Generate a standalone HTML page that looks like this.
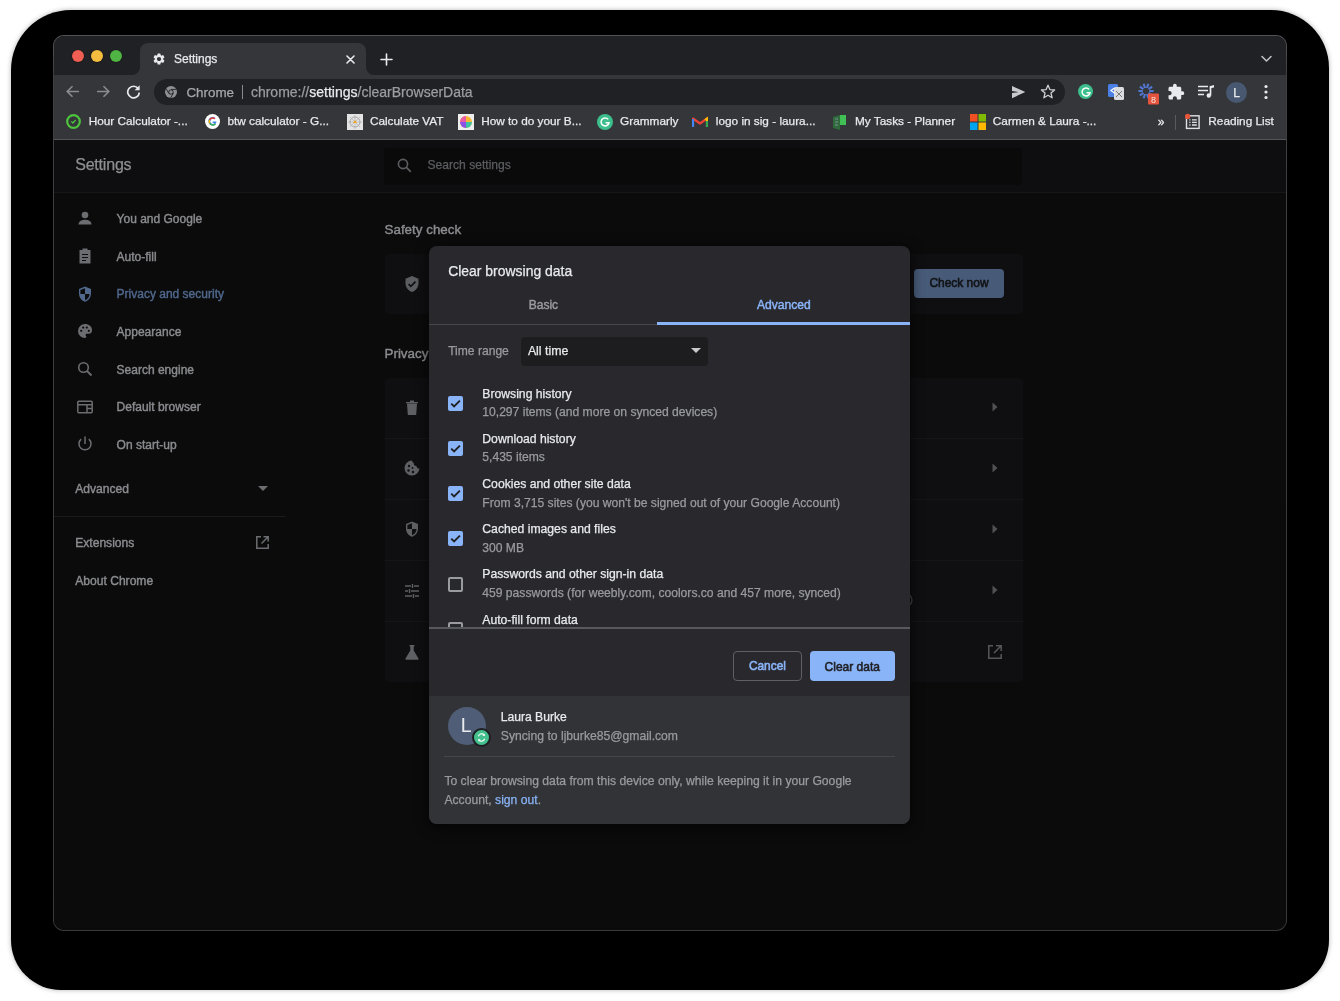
<!DOCTYPE html><html><head><meta charset="utf-8"><style>html,body{margin:0;padding:0;background:#fff;width:1340px;height:1001px;overflow:hidden;position:relative;font-family:"Liberation Sans", sans-serif} div{-webkit-text-stroke-width:0.25px}</style></head><body><div style="position:absolute;left:0;top:0;width:1340px;height:1001px;will-change:transform"><div style="position:absolute;left:11px;top:10px;width:1318px;height:980px;background:#000;border-radius:60px 58px 50px 50px;box-shadow:0 0 5px rgba(0,0,0,0.3)"></div><div style="position:absolute;left:53px;top:35px;width:1234px;height:896px;background:linear-gradient(#525255,#3f3f42 40px,#3a3a3c);border-radius:11px;overflow:hidden"><div style="position:absolute;left:1px;top:1px;width:1232px;height:894px;background:#0b0b0c;border-radius:10px;overflow:hidden"></div></div><div style="position:absolute;left:54px;top:36px;width:1232px;height:39px;background:#202124;border-radius:10px 10px 0 0"></div><div style="position:absolute;left:140px;top:43px;width:226px;height:32px;background:#35363a;border-radius:8px 8px 0 0"></div><svg style="position:absolute;left:132px;top:67px" width="8" height="8"><path d="M8 0 V8 H0 A8 8 0 0 0 8 0Z" fill="#35363a"/></svg><svg style="position:absolute;left:366px;top:67px" width="8" height="8"><path d="M0 0 V8 H8 A8 8 0 0 1 0 0Z" fill="#35363a"/></svg><div style="position:absolute;left:54px;top:75px;width:1232px;height:64px;background:#35363a;"></div><div style="position:absolute;left:54px;top:139px;width:1232px;height:1px;background:#545558;"></div><div style="position:absolute;left:54px;top:140px;width:1232px;height:790px;background:#0b0b0c;border-radius:0 0 10px 10px"></div><div style="position:absolute;left:54px;top:140px;width:1232px;height:52px;background:#0e0e10;"></div><div style="position:absolute;left:72px;top:50px;width:12px;height:12px;border-radius:50%;background:#ee5e52;box-shadow:0 0 0 0.6px rgba(0,0,0,0.35)"></div><div style="position:absolute;left:91px;top:50px;width:12px;height:12px;border-radius:50%;background:#f4bd3f;box-shadow:0 0 0 0.6px rgba(0,0,0,0.35)"></div><div style="position:absolute;left:110px;top:50px;width:12px;height:12px;border-radius:50%;background:#4fb443;box-shadow:0 0 0 0.6px rgba(0,0,0,0.35)"></div><svg style="position:absolute;left:152px;top:52px" width="14" height="14" viewBox="0 0 24 24"><path fill="#e8eaed" d="M19.14 12.94c.04-.3.06-.61.06-.94 0-.32-.02-.64-.07-.94l2.03-1.58a.49.49 0 0 0 .12-.61l-1.92-3.32a.488.488 0 0 0-.59-.22l-2.39.96c-.5-.38-1.03-.7-1.62-.94l-.36-2.54a.484.484 0 0 0-.48-.41h-3.84c-.24 0-.43.17-.47.41l-.36 2.54c-.59.24-1.13.57-1.62.94l-2.39-.96c-.22-.08-.47 0-.59.22L2.74 8.87c-.12.21-.08.47.12.61l2.03 1.58c-.05.3-.09.63-.09.94s.02.64.07.94l-2.03 1.58a.49.49 0 0 0-.12.61l1.92 3.32c.12.22.37.29.59.22l2.39-.96c.5.38 1.03.7 1.62.94l.36 2.54c.05.24.24.41.48.41h3.84c.24 0 .44-.17.47-.41l.36-2.54c.59-.24 1.13-.56 1.62-.94l2.39.96c.22.08.47 0 .59-.22l1.92-3.32c.12-.22.07-.47-.12-.61l-2.01-1.58zM12 15.6c-1.98 0-3.6-1.62-3.6-3.6s1.62-3.6 3.6-3.6 3.6 1.62 3.6 3.6-1.62 3.6-3.6 3.6z"/></svg><div style="position:absolute;left:174px;top:53.24px;font-size:12px;line-height:12px;color:#e8eaed;font-weight:400;white-space:nowrap;">Settings</div><svg style="position:absolute;left:346px;top:55px" width="9" height="9" viewBox="0 0 9 9"><path d="M1 1L8 8M8 1L1 8" stroke="#e8eaed" stroke-width="1.6" stroke-linecap="round"/></svg><svg style="position:absolute;left:380px;top:53px" width="13" height="13" viewBox="0 0 13 13"><path d="M6.5 1V12M1 6.5H12" stroke="#e8eaed" stroke-width="1.6" stroke-linecap="round"/></svg><svg style="position:absolute;left:1261px;top:55px" width="11" height="8" viewBox="0 0 11 8"><path d="M1 1.5L5.5 6L10 1.5" stroke="#c4c5c8" stroke-width="1.5" fill="none" stroke-linecap="round" stroke-linejoin="round"/></svg><svg style="position:absolute;left:66px;top:85px" width="14" height="13" viewBox="0 0 14 13"><path d="M13 6.5H1.5M6.5 1.2L1.2 6.5L6.5 11.8" stroke="#8a8b8e" stroke-width="1.6" fill="none"/></svg><svg style="position:absolute;left:96px;top:85px" width="14" height="13" viewBox="0 0 14 13"><path d="M1 6.5H12.5M7.5 1.2L12.8 6.5L7.5 11.8" stroke="#8a8b8e" stroke-width="1.6" fill="none"/></svg><svg style="position:absolute;left:126px;top:84px" width="15" height="15" viewBox="0 0 15 15"><path d="M12.2 4.6A5.8 5.8 0 1 0 13.3 8.6" stroke="#e8eaed" stroke-width="1.7" fill="none"/><path d="M13.6 1.2V6.2H8.6Z" fill="#e8eaed"/></svg><div style="position:absolute;left:154px;top:79px;width:911px;height:26px;background:#202124;border-radius:13px"></div><svg style="position:absolute;left:165px;top:86px" width="12" height="12" viewBox="0 0 12 12"><circle cx="6" cy="6" r="6" fill="#8f9094"/><circle cx="6" cy="6" r="2.6" fill="#202124"/><circle cx="6" cy="6" r="1.8" fill="#8f9094"/><path d="M6 3.4H11.4M3.75 7.3L1.1 2.6M8.25 7.3L5.6 11.9" stroke="#202124" stroke-width="0.9"/></svg><div style="position:absolute;left:186.4px;top:85.76px;font-size:13.4px;line-height:13.4px;color:#a6a7aa;font-weight:400;white-space:nowrap;">Chrome</div><div style="position:absolute;left:242px;top:85px;width:1px;height:14px;background:#8a8b8e;"></div><div style="position:absolute;left:250.9px;top:84.75px;font-size:14px;line-height:14px;white-space:nowrap;color:#9c9da0">chrome://<span style="color:#e8eaed">settings</span>/clearBrowserData</div><svg style="position:absolute;left:1011.5px;top:86px" width="14" height="12.5" viewBox="0 0 14 12.5"><path d="M0 0L13.3 6.1L0 12.2V7.1L6.8 6.1L0 5.1Z" fill="#c8c9cc"/></svg><svg style="position:absolute;left:1040px;top:84px" width="16" height="15" viewBox="0 0 16 15"><path d="M8 1.2L9.9 5.6L14.6 6L11 9.1L12.1 13.8L8 11.3L3.9 13.8L5 9.1L1.4 6L6.1 5.6Z" stroke="#d0d1d4" stroke-width="1.3" fill="none" stroke-linejoin="round"/></svg><div style="position:absolute;left:1078px;top:84px;width:15px;height:15px;border-radius:50%;background:#3cbf8c"></div><svg style="position:absolute;left:1077.5px;top:83.5px" width="16" height="16" viewBox="0 0 16 16"><path d="M11.2 5.4A4 4 0 1 0 12 8.8H8.6" stroke="#fff" stroke-width="1.5" fill="none"/></svg><svg style="position:absolute;left:1107px;top:83px" width="18" height="18" viewBox="0 0 18 18"><rect x="1" y="1" width="10" height="13" rx="1.5" fill="#4a80e6"/><rect x="7" y="4" width="10" height="13" rx="1.5" fill="#dadce0"/><path d="M9 8L15 14M15 8L9 14" stroke="#777" stroke-width="1"/><path d="M7.5 5L4 7.5L7.5 10" stroke="#fff" stroke-width="1.2" fill="none"/></svg><svg style="position:absolute;left:1137px;top:82px" width="24" height="24" viewBox="0 0 24 24"><path d="M12.20 9.00L16.60 9.00M11.59 10.88L15.15 13.47M9.99 12.04L11.35 16.23M8.01 12.04L6.65 16.23M6.41 10.88L2.85 13.47M5.80 9.00L1.40 9.00M6.41 7.12L2.85 4.53M8.01 5.96L6.65 1.77M9.99 5.96L11.35 1.77M11.59 7.12L15.15 4.53" stroke="#5177cf" stroke-width="2.1"/><rect x="11" y="11.5" width="11" height="11" rx="1" fill="#e5533c"/><text x="16.5" y="20.6" font-size="9" fill="#f3e8e0" text-anchor="middle" font-family="Liberation Sans">8</text></svg><svg style="position:absolute;left:1167px;top:83px" width="18" height="18" viewBox="0 0 24 24"><path fill="#e8eaed" d="M20.5 11H19V7c0-1.1-.9-2-2-2h-4V3.5a2.5 2.5 0 0 0-5 0V5H4c-1.1 0-1.99.9-1.99 2v3.8H3.5c1.49 0 2.7 1.21 2.7 2.7s-1.21 2.7-2.7 2.7H2V20c0 1.1.9 2 2 2h3.8v-1.5c0-1.49 1.21-2.7 2.7-2.7s2.7 1.21 2.7 2.7V22H17c1.1 0 2-.9 2-2v-4h1.5a2.5 2.5 0 0 0 0-5z"/></svg><svg style="position:absolute;left:1197px;top:84px" width="18" height="15" viewBox="0 0 18 15"><path d="M1 2.5H11M1 6.5H11M1 10.5H7" stroke="#e8eaed" stroke-width="1.7"/><path d="M13.5 2V11.5" stroke="#e8eaed" stroke-width="1.7"/><path d="M13.5 2L17 1V3.5L13.5 4.3Z" fill="#e8eaed"/><circle cx="11.8" cy="11.5" r="2.2" fill="#e8eaed"/></svg><div style="position:absolute;left:1226px;top:82px;width:21px;height:21px;border-radius:50%;background:#475870"></div><div style="position:absolute;left:936.5px;width:600px;text-align:center;top:86.84px;font-size:12px;line-height:12px;color:#e8eaed;font-weight:400;white-space:nowrap;">L</div><svg style="position:absolute;left:1262px;top:84px" width="8" height="16" viewBox="0 0 8 16"><circle cx="4" cy="2.5" r="1.6" fill="#e8eaed"/><circle cx="4" cy="8" r="1.6" fill="#e8eaed"/><circle cx="4" cy="13.5" r="1.6" fill="#e8eaed"/></svg><svg style="position:absolute;left:66px;top:114px" width="15" height="15" viewBox="0 0 15 15"><circle cx="7.5" cy="7.5" r="6.3" stroke="#4cc43c" stroke-width="2.2" fill="none"/><path d="M5.3 7.6L6.9 9L9.6 6" stroke="#4cc43c" stroke-width="1.3" fill="none"/></svg><div style="position:absolute;left:88.7px;top:116.41px;font-size:11.8px;line-height:11.8px;color:#e8eaed;font-weight:400;white-space:nowrap;">Hour Calculator -...</div><svg style="position:absolute;left:205px;top:114px" width="15" height="15" viewBox="0 0 15 15"><circle cx="7.5" cy="7.5" r="7.5" fill="#fff"/><path d="M11.6 7.6H7.6V9.2H9.9A2.6 2.6 0 1 1 9.3 5.3L10.5 4.2A4.2 4.2 0 1 0 11.6 7.6Z" fill="#4285f4"/><path d="M4 5.4L5.3 6.4A2.6 2.6 0 0 1 9.3 5.3L10.5 4.2A4.2 4.2 0 0 0 4 5.4Z" fill="#ea4335"/><path d="M4 9.6L5.3 8.6A2.6 2.6 0 0 0 9.9 9.2L11 10.3A4.2 4.2 0 0 1 4 9.6Z" fill="#34a853"/><path d="M4 5.4L5.3 6.4A2.6 2.6 0 0 0 5.3 8.6L4 9.6A4.2 4.2 0 0 1 4 5.4Z" fill="#fbbc05"/></svg><div style="position:absolute;left:227.4px;top:116.41px;font-size:11.8px;line-height:11.8px;color:#e8eaed;font-weight:400;white-space:nowrap;">btw calculator - G...</div><svg style="position:absolute;left:347px;top:114px" width="16" height="16" viewBox="0 0 16 16"><rect width="16" height="16" fill="#e4e4e4"/><circle cx="8" cy="8" r="5" stroke="#999" stroke-width="0.8" fill="none"/><path d="M8 1V15M1 8H15M3 3L13 13M13 3L3 13" stroke="#aaa" stroke-width="0.6"/><path d="M6 9L8 6L10 9Z" fill="#f2a91e"/></svg><div style="position:absolute;left:369.9px;top:116.41px;font-size:11.8px;line-height:11.8px;color:#e8eaed;font-weight:400;white-space:nowrap;">Calculate VAT</div><svg style="position:absolute;left:458px;top:114px" width="16" height="16" viewBox="0 0 16 16"><rect width="16" height="16" fill="#eee"/><circle cx="8" cy="8" r="6" fill="#f7b733"/><path d="M8 2A6 6 0 0 0 2 8H8Z" fill="#e85ba6"/><path d="M2 8A6 6 0 0 0 8 14V8Z" fill="#8c52e8"/><path d="M8 14A6 6 0 0 0 14 8H8Z" fill="#3fc3a2"/></svg><div style="position:absolute;left:481.2px;top:116.41px;font-size:11.8px;line-height:11.8px;color:#e8eaed;font-weight:400;white-space:nowrap;">How to do your B...</div><div style="position:absolute;left:597px;top:114px;width:16px;height:16px;border-radius:50%;background:#3cbf8c"></div><svg style="position:absolute;left:597px;top:114px" width="16" height="16" viewBox="0 0 16 16"><path d="M11.2 5.4A4 4 0 1 0 12 8.8H8.6" stroke="#fff" stroke-width="1.5" fill="none"/></svg><div style="position:absolute;left:620.1px;top:116.41px;font-size:11.8px;line-height:11.8px;color:#e8eaed;font-weight:400;white-space:nowrap;">Grammarly</div><svg style="position:absolute;left:692px;top:116px" width="16" height="12" viewBox="0 0 16 12"><path d="M1 11V2.5L8 7.5L15 2.5V11" stroke="#ea4335" stroke-width="2.2" fill="none" stroke-linejoin="round"/><path d="M1 11V3" stroke="#4285f4" stroke-width="2.2"/><path d="M15 11V3" stroke="#34a853" stroke-width="2.2"/><path d="M13 4L15 2.5V5" stroke="#fbbc04" stroke-width="2"/></svg><div style="position:absolute;left:715.8px;top:116.41px;font-size:11.8px;line-height:11.8px;color:#e8eaed;font-weight:400;white-space:nowrap;">logo in sig - laura...</div><svg style="position:absolute;left:832px;top:114px" width="15" height="16" viewBox="0 0 15 16"><path d="M1 3L8 1V16L1 14Z" fill="#2f6b3c"/><path d="M8 1H14V11H8Z" fill="#3fbf55"/><path d="M3 5H6M3 8H6M3 11H6" stroke="#7c8d9a" stroke-width="1"/></svg><div style="position:absolute;left:855px;top:116.41px;font-size:11.8px;line-height:11.8px;color:#e8eaed;font-weight:400;white-space:nowrap;">My Tasks - Planner</div><svg style="position:absolute;left:970px;top:114px" width="16" height="16" viewBox="0 0 16 16"><rect x="0" y="0" width="7.5" height="7.5" fill="#f25022"/><rect x="8.5" y="0" width="7.5" height="7.5" fill="#7fba00"/><rect x="0" y="8.5" width="7.5" height="7.5" fill="#00a4ef"/><rect x="8.5" y="8.5" width="7.5" height="7.5" fill="#ffb900"/></svg><div style="position:absolute;left:992.8px;top:116.41px;font-size:11.8px;line-height:11.8px;color:#e8eaed;font-weight:400;white-space:nowrap;">Carmen &amp; Laura -...</div><div style="position:absolute;left:861px;width:600px;text-align:center;top:115.54px;font-size:12px;line-height:12px;color:#e8eaed;font-weight:400;white-space:nowrap;">&raquo;</div><div style="position:absolute;left:1175px;top:114.5px;width:1px;height:15px;background:#5a5b5e;"></div><svg style="position:absolute;left:1184px;top:113px" width="17" height="18" viewBox="0 0 17 18"><rect x="2.5" y="2.8" width="12.6" height="12.6" stroke="#e0e1e4" stroke-width="1.4" fill="none"/><path d="M5.3 6.8H6.5M8 6.8H12.8M5.3 9.4H6.5M8 9.4H12.8M5.3 12H6.5M8 12H12.8" stroke="#e0e1e4" stroke-width="1.3"/><circle cx="3.6" cy="3.4" r="2.6" fill="#e8553a"/></svg><div style="position:absolute;left:1208.3px;top:116.41px;font-size:11.8px;line-height:11.8px;color:#e8eaed;font-weight:400;white-space:nowrap;">Reading List</div><div style="position:absolute;left:75.2px;top:157.26px;font-size:16px;line-height:16px;color:#8e8f92;font-weight:400;white-space:nowrap;letter-spacing:-0.2px">Settings</div><div style="position:absolute;left:54px;top:192px;width:1232px;height:1px;background:#17171a;"></div><div style="position:absolute;left:384px;top:147.5px;width:638px;height:37px;background:#0a0a0b;border-radius:4px"></div><svg style="position:absolute;left:397px;top:158px" width="15" height="15" viewBox="0 0 15 15"><circle cx="6" cy="6" r="4.6" stroke="#5c5d60" stroke-width="1.6" fill="none"/><path d="M9.4 9.4L13.8 13.8" stroke="#5c5d60" stroke-width="1.7"/></svg><div style="position:absolute;left:427.5px;top:159.36px;font-size:12.1px;line-height:12.1px;color:#5c5d60;font-weight:400;white-space:nowrap;">Search settings</div><div style="position:absolute;left:116.6px;top:212.94px;font-size:12px;line-height:12px;color:#8b8c8f;font-weight:400;white-space:nowrap;-webkit-text-stroke-width:0.4px">You and Google</div><svg style="position:absolute;left:76px;top:209px" width="18" height="18" viewBox="0 0 18 18"><circle cx="9" cy="6" r="3.3" fill="#6c6d70"/><path d="M2.5 15.5C2.5 11.8 6.5 10.8 9 10.8S15.5 11.8 15.5 15.5Z" fill="#6c6d70"/></svg><div style="position:absolute;left:116.6px;top:250.61px;font-size:12px;line-height:12px;color:#8b8c8f;font-weight:400;white-space:nowrap;-webkit-text-stroke-width:0.4px">Auto-fill</div><svg style="position:absolute;left:76px;top:247px" width="18" height="18" viewBox="0 0 18 18"><path d="M3.5 3H14.5V16.5H3.5Z" fill="#6c6d70"/><rect x="6.5" y="1.5" width="5" height="3" fill="#6c6d70"/><path d="M6 7.5H12M6 10.5H12M6 13.5H10" stroke="#0b0b0c" stroke-width="1.1"/></svg><div style="position:absolute;left:116.6px;top:288.28px;font-size:12px;line-height:12px;color:#50688c;font-weight:400;white-space:nowrap;-webkit-text-stroke-width:0.4px">Privacy and security</div><svg style="position:absolute;left:76px;top:285px" width="18" height="18" viewBox="0 0 18 18"><path d="M9 1.5L15 4V8.5C15 12.5 12.5 15.7 9 16.8C5.5 15.7 3 12.5 3 8.5V4Z" fill="#50688c"/><path d="M9 3.2V9H13.6C13.4 12 11.6 14.4 9 15.2V9H4.4V4.9Z" fill="#0b0b0c"/></svg><div style="position:absolute;left:116.6px;top:325.95px;font-size:12px;line-height:12px;color:#8b8c8f;font-weight:400;white-space:nowrap;-webkit-text-stroke-width:0.4px">Appearance</div><svg style="position:absolute;left:76px;top:322px" width="18" height="18" viewBox="0 0 18 18"><path d="M9 2A7 7 0 0 0 9 16C9.8 16 10.3 15.4 10.3 14.8C10.3 14.4 10.1 14.1 9.9 13.9C9.7 13.6 9.6 13.3 9.6 13C9.6 12.3 10.1 11.8 10.8 11.8H12.2A3.9 3.9 0 0 0 16 7.9C16 4.6 12.9 2 9 2Z" fill="#6c6d70"/><circle cx="5.2" cy="8.8" r="1.1" fill="#0b0b0c"/><circle cx="7.2" cy="5.6" r="1.1" fill="#0b0b0c"/><circle cx="10.8" cy="5.6" r="1.1" fill="#0b0b0c"/><circle cx="12.8" cy="8.8" r="1.1" fill="#0b0b0c"/></svg><div style="position:absolute;left:116.6px;top:363.62px;font-size:12px;line-height:12px;color:#8b8c8f;font-weight:400;white-space:nowrap;-webkit-text-stroke-width:0.4px">Search engine</div><svg style="position:absolute;left:76px;top:360px" width="18" height="18" viewBox="0 0 18 18"><circle cx="7.5" cy="7.5" r="4.8" stroke="#6c6d70" stroke-width="1.6" fill="none"/><path d="M11 11L15.5 15.5" stroke="#6c6d70" stroke-width="1.8"/></svg><div style="position:absolute;left:116.6px;top:401.29px;font-size:12px;line-height:12px;color:#8b8c8f;font-weight:400;white-space:nowrap;-webkit-text-stroke-width:0.4px">Default browser</div><svg style="position:absolute;left:76px;top:398px" width="18" height="18" viewBox="0 0 18 18"><rect x="1.8" y="3.2" width="14.4" height="11.6" rx="1" stroke="#6c6d70" stroke-width="1.5" fill="none"/><path d="M1.8 6.8H16.2M11 6.8V14.8M11 10.6H16.2" stroke="#6c6d70" stroke-width="1.5"/></svg><div style="position:absolute;left:116.6px;top:438.96px;font-size:12px;line-height:12px;color:#8b8c8f;font-weight:400;white-space:nowrap;-webkit-text-stroke-width:0.4px">On start-up</div><svg style="position:absolute;left:76px;top:435px" width="18" height="18" viewBox="0 0 18 18"><path d="M9 1.5V9" stroke="#6c6d70" stroke-width="1.5"/><path d="M5.2 4.2A6 6 0 1 0 12.8 4.2" stroke="#6c6d70" stroke-width="1.5" fill="none"/></svg><div style="position:absolute;left:75.2px;top:483.36px;font-size:12.1px;line-height:12.1px;color:#8b8c8f;font-weight:400;white-space:nowrap;-webkit-text-stroke-width:0.4px">Advanced</div><svg style="position:absolute;left:258px;top:486px" width="10" height="6" viewBox="0 0 10 6"><path d="M0 0H10L5 5Z" fill="#6c6d70"/></svg><div style="position:absolute;left:54px;top:516px;width:232px;height:1px;background:#1a1a1d;"></div><div style="position:absolute;left:75.2px;top:537.46px;font-size:12.1px;line-height:12.1px;color:#8b8c8f;font-weight:400;white-space:nowrap;-webkit-text-stroke-width:0.4px">Extensions</div><svg style="position:absolute;left:255px;top:535px" width="15" height="15" viewBox="0 0 15 15"><path d="M6 1.8H1.8V13.2H13.2V9" stroke="#6c6d70" stroke-width="1.5" fill="none"/><path d="M8.5 1.8H13.2V6.5M13.2 1.8L6.5 8.5" stroke="#6c6d70" stroke-width="1.5" fill="none"/></svg><div style="position:absolute;left:75.2px;top:574.76px;font-size:12.1px;line-height:12.1px;color:#8b8c8f;font-weight:400;white-space:nowrap;-webkit-text-stroke-width:0.4px">About Chrome</div><div style="position:absolute;left:384.5px;top:222.96px;font-size:13.4px;line-height:13.4px;color:#8b8c8f;font-weight:400;white-space:nowrap;-webkit-text-stroke-width:0.4px">Safety check</div><div style="position:absolute;left:384.5px;top:254px;width:638px;height:60px;background:#0f0f11;border-radius:4px"></div><svg style="position:absolute;left:403px;top:275px" width="18" height="18" viewBox="0 0 18 18"><path d="M9 1L15.5 3.7V8.3C15.5 12.5 12.7 15.9 9 17C5.3 15.9 2.5 12.5 2.5 8.3V3.7Z" fill="#5c5d60"/><path d="M5.6 9.2L7.8 11.4L12.5 6.7" stroke="#0f0f11" stroke-width="1.7" fill="none"/></svg><div style="position:absolute;left:914.4px;top:268.8px;width:89.5px;height:29.6px;background:#475a77;border-radius:4px"></div><div style="position:absolute;left:659px;width:600px;text-align:center;top:277.68px;font-size:11.95px;line-height:11.95px;color:#111214;font-weight:400;white-space:nowrap;-webkit-text-stroke-width:0.55px">Check now</div><div style="position:absolute;left:384.5px;top:346.66px;font-size:13.4px;line-height:13.4px;color:#8b8c8f;font-weight:400;white-space:nowrap;-webkit-text-stroke-width:0.4px">Privacy</div><div style="position:absolute;left:384.5px;top:378px;width:638px;height:304px;background:#0f0f11;border-radius:4px"></div><div style="position:absolute;left:384.5px;top:438px;width:638px;height:1px;background:#161618;"></div><div style="position:absolute;left:384.5px;top:499px;width:638px;height:1px;background:#161618;"></div><div style="position:absolute;left:384.5px;top:560px;width:638px;height:1px;background:#161618;"></div><div style="position:absolute;left:384.5px;top:621px;width:638px;height:1px;background:#161618;"></div><svg style="position:absolute;left:991px;top:402px" width="8" height="10" viewBox="0 0 8 10"><path d="M1.5 0.5L6.5 5L1.5 9.5Z" fill="#505154"/></svg><svg style="position:absolute;left:991px;top:463px" width="8" height="10" viewBox="0 0 8 10"><path d="M1.5 0.5L6.5 5L1.5 9.5Z" fill="#505154"/></svg><svg style="position:absolute;left:991px;top:524px" width="8" height="10" viewBox="0 0 8 10"><path d="M1.5 0.5L6.5 5L1.5 9.5Z" fill="#505154"/></svg><svg style="position:absolute;left:991px;top:585px" width="8" height="10" viewBox="0 0 8 10"><path d="M1.5 0.5L6.5 5L1.5 9.5Z" fill="#505154"/></svg><svg style="position:absolute;left:987px;top:644px" width="16" height="16" viewBox="0 0 16 16"><path d="M6 1.8H1.8V14.2H14.2V10" stroke="#56575a" stroke-width="1.5" fill="none"/><path d="M9 1.8H14.2V7M14.2 1.8L7 9" stroke="#56575a" stroke-width="1.5" fill="none"/></svg><svg style="position:absolute;left:404px;top:399px" width="16" height="17" viewBox="0 0 16 17"><path d="M3 4.5H13L12.2 16H3.8Z" fill="#5f6063"/><path d="M2 3H14V4.3H2Z M6 1.5H10V3H6Z" fill="#5f6063"/></svg><svg style="position:absolute;left:403px;top:459px" width="18" height="18" viewBox="0 0 18 18"><path d="M9 1.5A7.5 7.5 0 1 0 16.5 9.5A2.5 2.5 0 0 1 13.5 7A2.5 2.5 0 0 1 10.8 4A2.5 2.5 0 0 1 9 1.5Z" fill="#5f6063"/><circle cx="6" cy="7" r="1.2" fill="#101012"/><circle cx="5.5" cy="11.5" r="1.2" fill="#101012"/><circle cx="10" cy="13" r="1.2" fill="#101012"/><circle cx="9.5" cy="9" r="0.9" fill="#101012"/></svg><svg style="position:absolute;left:403px;top:520px" width="18" height="18" viewBox="0 0 18 18"><path d="M9 1.5L15 4V8.5C15 12.5 12.5 15.7 9 16.8C5.5 15.7 3 12.5 3 8.5V4Z" fill="#5f6063"/><path d="M9 3.2V9H13.6C13.4 12 11.6 14.4 9 15.2V9H4.4V4.9Z" fill="#101012"/></svg><svg style="position:absolute;left:403px;top:582px" width="18" height="18" viewBox="0 0 18 18"><path d="M2 4H8M11 4H16M2 9H5M8 9H16M2 14H9M12 14H16M9.5 2V6M6.5 7V11M10.5 12V16" stroke="#5f6063" stroke-width="1.4"/></svg><svg style="position:absolute;left:403px;top:643px" width="18" height="18" viewBox="0 0 18 18"><path d="M6.5 2H11.5V3.3H10.7V7.5L15.5 15.5C15.9 16.2 15.5 16.7 14.8 16.7H3.2C2.5 16.7 2.1 16.2 2.5 15.5L7.3 7.5V3.3H6.5Z" fill="#5f6063"/></svg><svg style="position:absolute;left:900px;top:590px" width="20" height="20" viewBox="0 0 20 20"><circle cx="6" cy="10" r="6" stroke="#44474a" stroke-width="1.2" fill="none"/></svg><div style="position:absolute;left:429px;top:246px;width:481px;height:578px;background:#29292d;border-radius:8px;overflow:hidden;box-shadow:0 3px 12px 2px rgba(0,0,0,0.55)"></div><div style="position:absolute;left:429px;top:695.5px;width:481px;height:128.5px;background:#323336;border-radius:0 0 8px 8px"></div><div style="position:absolute;left:448.2px;top:264.99px;font-size:13.95px;line-height:13.95px;color:#e8eaed;font-weight:400;white-space:nowrap;">Clear browsing data</div><div style="position:absolute;left:243.39999999999998px;width:600px;text-align:center;top:299.49px;font-size:12.06px;line-height:12.06px;color:#9a9b9e;font-weight:400;white-space:nowrap;-webkit-text-stroke-width:0.45px">Basic</div><div style="position:absolute;left:483.79999999999995px;width:600px;text-align:center;top:299.48px;font-size:12.07px;line-height:12.07px;color:#8ab4f8;font-weight:400;white-space:nowrap;-webkit-text-stroke-width:0.45px">Advanced</div><div style="position:absolute;left:429px;top:324px;width:481px;height:1px;background:#47484b;"></div><div style="position:absolute;left:657.4px;top:322px;width:252.6px;height:2.5px;background:#8ab4f8;"></div><div style="position:absolute;left:448.2px;top:345.07px;font-size:12.09px;line-height:12.09px;color:#9a9b9e;font-weight:400;white-space:nowrap;">Time range</div><div style="position:absolute;left:520.7px;top:337px;width:187.4px;height:28.7px;background:#1d1d20;border-radius:4px"></div><div style="position:absolute;left:527.9px;top:344.85px;font-size:12.35px;line-height:12.35px;color:#e8eaed;font-weight:400;white-space:nowrap;">All time</div><svg style="position:absolute;left:691px;top:348px" width="10" height="5" viewBox="0 0 10 5"><path d="M0 0H10L5 5Z" fill="#c8c9cc"/></svg><div style="position:absolute;left:429px;top:366px;width:481px;height:261.5px;overflow:hidden"><div style="position:absolute;left:19px;top:30.1px;width:15px;height:15px;background:#8ab4f8;border-radius:2px"></div><svg style="position:absolute;left:19px;top:30.1px" width="15" height="15"><path d="M3.2 7.6L6.1 10.4L11.9 4.6" stroke="#202124" stroke-width="1.9" fill="none"/></svg><div style="position:absolute;left:53.3px;top:22.07px;font-size:12.2px;line-height:12.2px;color:#e8eaed;white-space:nowrap">Browsing history</div><div style="position:absolute;left:53.3px;top:40.35px;font-size:12.11px;line-height:12.11px;color:#9a9b9e;white-space:nowrap">10,297 items (and more on synced devices)</div><div style="position:absolute;left:19px;top:75.2px;width:15px;height:15px;background:#8ab4f8;border-radius:2px"></div><svg style="position:absolute;left:19px;top:75.2px" width="15" height="15"><path d="M3.2 7.6L6.1 10.4L11.9 4.6" stroke="#202124" stroke-width="1.9" fill="none"/></svg><div style="position:absolute;left:53.3px;top:67.17px;font-size:12.2px;line-height:12.2px;color:#e8eaed;white-space:nowrap">Download history</div><div style="position:absolute;left:53.3px;top:85.45px;font-size:12.11px;line-height:12.11px;color:#9a9b9e;white-space:nowrap">5,435 items</div><div style="position:absolute;left:19px;top:120.3px;width:15px;height:15px;background:#8ab4f8;border-radius:2px"></div><svg style="position:absolute;left:19px;top:120.3px" width="15" height="15"><path d="M3.2 7.6L6.1 10.4L11.9 4.6" stroke="#202124" stroke-width="1.9" fill="none"/></svg><div style="position:absolute;left:53.3px;top:112.27px;font-size:12.2px;line-height:12.2px;color:#e8eaed;white-space:nowrap">Cookies and other site data</div><div style="position:absolute;left:53.3px;top:130.55px;font-size:12.11px;line-height:12.11px;color:#9a9b9e;white-space:nowrap">From 3,715 sites (you won't be signed out of your Google Account)</div><div style="position:absolute;left:19px;top:165.4px;width:15px;height:15px;background:#8ab4f8;border-radius:2px"></div><svg style="position:absolute;left:19px;top:165.4px" width="15" height="15"><path d="M3.2 7.6L6.1 10.4L11.9 4.6" stroke="#202124" stroke-width="1.9" fill="none"/></svg><div style="position:absolute;left:53.3px;top:157.37px;font-size:12.2px;line-height:12.2px;color:#e8eaed;white-space:nowrap">Cached images and files</div><div style="position:absolute;left:53.3px;top:175.65px;font-size:12.11px;line-height:12.11px;color:#9a9b9e;white-space:nowrap">300 MB</div><div style="position:absolute;left:19px;top:210.5px;width:11px;height:11px;border:2px solid #9a9b9e;border-radius:2px"></div><div style="position:absolute;left:53.3px;top:202.47px;font-size:12.2px;line-height:12.2px;color:#e8eaed;white-space:nowrap">Passwords and other sign-in data</div><div style="position:absolute;left:53.3px;top:220.75px;font-size:12.11px;line-height:12.11px;color:#9a9b9e;white-space:nowrap">459 passwords (for weebly.com, coolors.co and 457 more, synced)</div><div style="position:absolute;left:19px;top:255.6px;width:11px;height:11px;border:2px solid #9a9b9e;border-radius:2px"></div><div style="position:absolute;left:53.3px;top:247.57px;font-size:12.2px;line-height:12.2px;color:#e8eaed;white-space:nowrap">Auto-fill form data</div></div><div style="position:absolute;left:429px;top:627px;width:481px;height:1.6px;background:#58595c;"></div><div style="position:absolute;left:732.7px;top:651px;width:67.4px;height:27.7px;border:1px solid #5f6063;border-radius:4px"></div><div style="position:absolute;left:467.4px;width:600px;text-align:center;top:660.93px;font-size:11.9px;line-height:11.9px;color:#8ab4f8;font-weight:400;white-space:nowrap;-webkit-text-stroke-width:0.55px">Cancel</div><div style="position:absolute;left:809.6px;top:651px;width:85.4px;height:29.7px;background:#8ab4f8;border-radius:4px"></div><div style="position:absolute;left:552.3px;width:600px;text-align:center;top:660.84px;font-size:12.0px;line-height:12.0px;color:#202124;font-weight:400;white-space:nowrap;-webkit-text-stroke-width:0.55px">Clear data</div><div style="position:absolute;left:448px;top:707px;width:38px;height:38px;border-radius:50%;background:#4f5e76"></div><div style="position:absolute;left:166.3px;width:600px;text-align:center;top:716.19px;font-size:19.5px;line-height:19.5px;color:#e8eaed;font-weight:400;white-space:nowrap;-webkit-text-stroke-width:0">L</div><div style="position:absolute;left:472px;top:728px;width:15px;height:15px;border-radius:50%;background:#44c08e;border:2px solid #1e1f22"></div><svg style="position:absolute;left:474px;top:730px" width="15" height="15" viewBox="0 0 15 15"><path d="M4.3 6.2A3.4 3.4 0 0 1 10.4 5.3M10.7 8.8A3.4 3.4 0 0 1 4.6 9.7" stroke="#e8f6ef" stroke-width="1.3" fill="none"/><path d="M10.9 3.6V6.1H8.4Z M4.1 11.4V8.9H6.6Z" fill="#e8f6ef"/></svg><div style="position:absolute;left:500.8px;top:710.86px;font-size:12.1px;line-height:12.1px;color:#e8eaed;font-weight:400;white-space:nowrap;">Laura Burke</div><div style="position:absolute;left:500.8px;top:729.51px;font-size:12.16px;line-height:12.16px;color:#9a9b9e;font-weight:400;white-space:nowrap;">Syncing to ljburke85@gmail.com</div><div style="position:absolute;left:444.4px;top:756px;width:450.6px;height:1px;background:#45464a;"></div><div style="position:absolute;left:444.4px;top:775.20px;font-size:12.17px;line-height:12.17px;color:#9a9b9e;font-weight:400;white-space:nowrap;">To clear browsing data from this device only, while keeping it in your Google</div><div style="position:absolute;left:444.4px;top:794.40px;font-size:12.17px;line-height:12.17px;color:#9a9b9e;font-weight:400;white-space:nowrap;">Account, <span style="color:#8ab4f8">sign out</span>.</div></div></body></html>
